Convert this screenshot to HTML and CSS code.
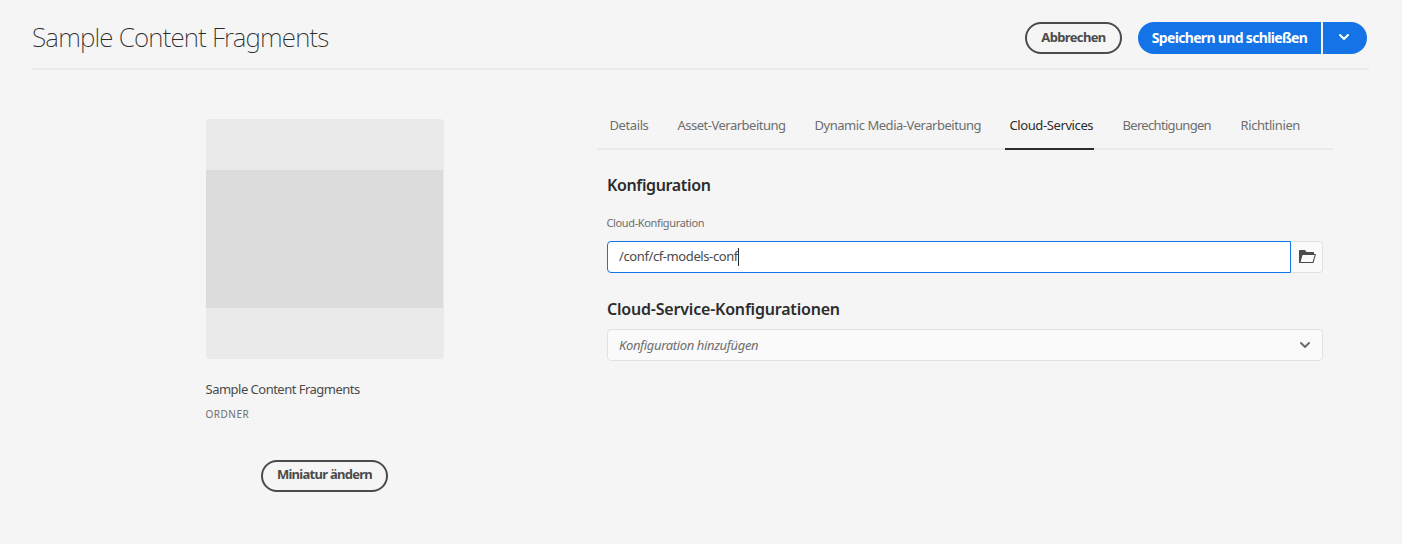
FILE: index.html
```html
<!DOCTYPE html>
<html lang="de">
<head>
<meta charset="utf-8">
<title>Sample Content Fragments</title>
<link rel="stylesheet" href="styles.css">
</head>
<body>
<header class="header">
  <h1 class="title">Sample Content Fragments</h1>
  <div class="actions">
    <button class="btn btn-cancel">Abbrechen</button>
    <div class="split">
      <button class="save"><span>Speichern und schließen</span></button>
      <button class="more" aria-label="Mehr"><svg width="10" height="7" viewBox="0 0 10 7"><path d="M1 1l4 4 4-4" fill="none" stroke="#fff" stroke-width="2" stroke-linecap="round" stroke-linejoin="round"/></svg></button>
    </div>
  </div>
</header>
<main class="main">
  <aside class="side">
    <div class="thumb"><div class="thumb-inner"></div></div>
    <div class="name">Sample Content Fragments</div>
    <div class="kind">ORDNER</div>
    <button class="btn btn-thumb">Miniatur ändern</button>
  </aside>
  <section class="content">
    <nav class="tabs">
      <a class="tab tab-details"><span>Details</span></a>
      <a class="tab tab-asset"><span>Asset-Verarbeitung</span></a>
      <a class="tab tab-media"><span>Dynamic Media-Verarbeitung</span></a>
      <a class="tab tab-cloud selected"><span>Cloud-Services</span></a>
      <a class="tab tab-perm"><span>Berechtigungen</span></a>
      <a class="tab tab-policy"><span>Richtlinien</span></a>
    </nav>
    <div class="panel">
      <h2 class="heading">Konfiguration</h2>
      <label class="label">Cloud-Konfiguration</label>
      <div class="field">
        <div class="input"><span>/conf/cf-models-conf</span><i class="caret"></i></div>
        <button class="browse" aria-label="Durchsuchen"><svg width="17" height="13" viewBox="0 0 17 13"><path fill="#4b4b4b" fill-rule="evenodd" d="M.5 0H6l1.500 2H14.500a.5.500 0 0 1 .5.500V4h1.400a.5.500 0 0 1 .45.700L14.600 12.600a.6.600 0 0 1-.5.400H.5a.5.500 0 0 1-.5-.5V.5A.5.500 0 0 1 .5 0zM3.600 5L1.500 12H13.600L15.700 5z"/></svg></button>
      </div>
      <h2 class="heading heading-services">Cloud-Service-Konfigurationen</h2>
      <div class="select"><span>Konfiguration hinzufügen</span><svg width="10" height="7" viewBox="0 0 10 7"><path d="M1 1l4 4 4-4" fill="none" stroke="#6e6e6e" stroke-width="2" stroke-linecap="round" stroke-linejoin="round"/></svg></div>
    </div>
  </section>
</main>
</body>
</html>
```
FILE: styles.css
```css
* { box-sizing: border-box; }
body { margin: 0; height: 544px; background: #f5f5f5; color: #4b4b4b; font-family: "Noto Sans", "Open Sans", sans-serif; font-size: 13px; overflow: hidden; }
h1, h2 { margin: 0; }
button { margin: 0; padding: 0; border: 0; font-family: inherit; white-space: nowrap; }
svg { display: block; }
.header { display: flex; justify-content: space-between; margin: 0 33px 0 32px; height: 70px; padding: 22px 2px 0 0; border-bottom: 2px solid #eaeaea; }
.title { font-size: 26px; font-weight: 200; line-height: 30px; letter-spacing: -0.78px; color: #2c2c2c; white-space: nowrap; }
.actions { display: flex; gap: 16px; }
.btn { height: 32px; border: 2px solid #4b4b4b; border-radius: 16px; background: transparent; color: #4b4b4b; font-size: 13px; font-weight: 700; line-height: 26px; padding-bottom: 2px; }
.btn-cancel { width: 97px; letter-spacing: -0.65px; }
.split { display: flex; gap: 2px; height: 32px; }
.save { width: 183px; border-radius: 16px 0 0 16px; background: #1473e6; color: #fff; font-size: 14px; font-weight: 700; letter-spacing: -0.67px; padding-bottom: 2px; }
.more { width: 44px; display: flex; align-items: center; justify-content: center; border-radius: 0 16px 16px 0; background: #1473e6; padding: 0 2px 2px 0; }
.main { display: flex; }
.side { width: 238px; margin: 49px 0 0 206px; display: flex; flex-direction: column; }
.thumb { height: 240px; background: #eaeaea; border-radius: 4px; padding: 51px 1px 0 0; }
.thumb-inner { height: 138px; background: #dcdcdc; }
.name { margin: 20px 0 0 -0.5px; line-height: 20px; letter-spacing: -0.51px; white-space: nowrap; }
.kind { margin: 7px 0 0 -0.5px; line-height: 16px; font-size: 10px; letter-spacing: 0.5px; color: #6e6e6e; }
.btn-thumb { width: 127px; margin: 38px 0 0 55px; letter-spacing: -0.72px; line-height: 24px; padding-bottom: 4px; }
.content { width: 736px; margin: 32px 0 0 153px; }
.tabs { display: flex; height: 48px; border-bottom: 2px solid #eaeaea; padding-left: 8px; }
.tab { height: 48px; padding: 13px 0 0 4.5px; line-height: 20px; letter-spacing: -0.4px; color: #6e6e6e; white-space: nowrap; margin-right: 24px; }
.tab-details { width: 44px; }
.tab-asset { width: 113px; letter-spacing: -0.5px; }
.tab-media { width: 171px; letter-spacing: -0.46px; }
.tab-cloud { width: 89px; }
.tab-perm { width: 94px; letter-spacing: -0.68px; }
.tab-policy { width: 66px; }
.selected { color: #2c2c2c; border-bottom: 2px solid #2c2c2c; }
.panel { margin-left: 10px; width: 716px; padding-top: 23px; }
.heading { font-size: 16px; font-weight: 600; line-height: 24px; letter-spacing: -0.36px; color: #2c2c2c; }
.label { display: block; margin: 18px 0 0 -0.5px; height: 26px; line-height: 16px; font-size: 11px; letter-spacing: -0.37px; color: #6e6e6e; }
.field { display: flex; height: 32px; }
.input { display: flex; align-items: center; width: 684px; padding: 0 11px 0 11px; border: 1px solid #1473e6; border-radius: 4px 0 0 4px; background: #fff; letter-spacing: -0.4px; }
.input span { padding-bottom: 2px; }
.caret { width: 1px; height: 18px; background: #2c2c2c; }
.browse { width: 32px; border: 1px solid #e1e1e1; border-left: 0; border-radius: 0 4px 4px 0; background: #fafafa; display: flex; align-items: center; justify-content: center; padding: 0 0 1px 2px; }
.heading-services { margin-top: 24px; letter-spacing: -0.2px; }
.select { display: flex; align-items: center; justify-content: space-between; height: 32px; margin-top: 8px; padding: 0 12px 0 11px; border: 1px solid #e1e1e1; border-radius: 4px; background: #fafafa; font-style: italic; letter-spacing: -0.36px; color: #6e6e6e; }
```
